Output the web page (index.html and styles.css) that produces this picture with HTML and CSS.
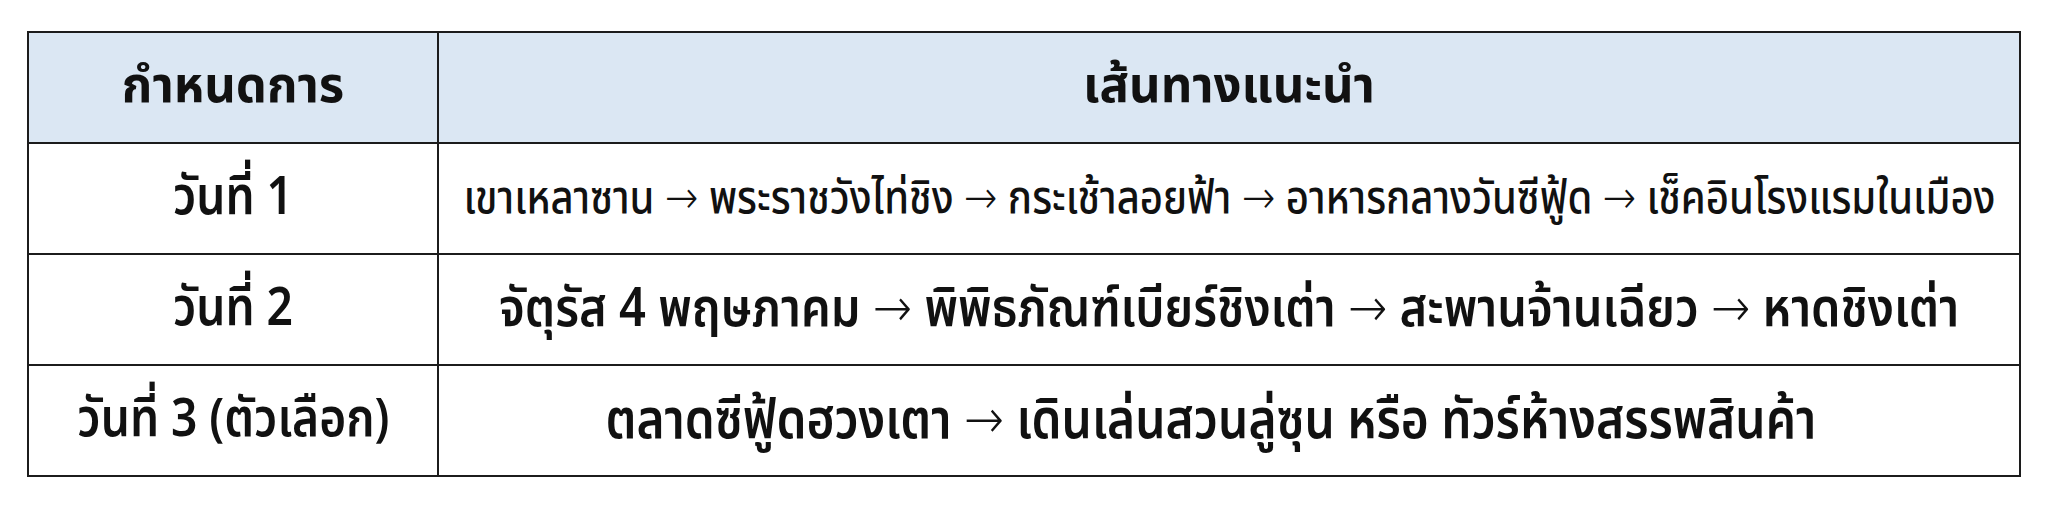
FILE: index.html
```html
<!DOCTYPE html>
<html lang="th">
<head>
<meta charset="utf-8">
<title>กำหนดการ</title>
<link rel="stylesheet" href="styles.css">
</head>
<body>
<div class="page">
  <table class="plan">
    <colgroup>
      <col class="col-day">
      <col class="col-route">
    </colgroup>
    <thead>
      <tr>
        <th>กำหนดการ</th>
        <th>เส้นทางแนะนำ</th>
      </tr>
    </thead>
    <tbody>
      <tr>
        <td class="day"><div class="cell"><span class="fit">วันที่ 1</span></div></td>
        <td class="route route-small"><div class="cell"><span class="fit">เขาเหลาซาน <span class="arrow">→</span> พระราชวังไท่ชิง <span class="arrow">→</span> กระเช้าลอยฟ้า <span class="arrow">→</span> อาหารกลางวันซีฟู้ด <span class="arrow">→</span> เช็คอินโรงแรมในเมือง</span></div></td>
      </tr>
      <tr>
        <td class="day"><div class="cell"><span class="fit">วันที่ 2</span></div></td>
        <td class="route"><div class="cell"><span class="fit">จัตุรัส 4 พฤษภาคม <span class="arrow">→</span> พิพิธภัณฑ์เบียร์ชิงเต่า <span class="arrow">→</span> สะพานจ้านเฉียว <span class="arrow">→</span> หาดชิงเต่า</span></div></td>
      </tr>
      <tr>
        <td class="day"><div class="cell"><span class="fit">วันที่ 3 (ตัวเลือก)</span></div></td>
        <td class="route route-last"><div class="cell"><span class="fit">ตลาดซีฟู้ดฮวงเตา <span class="arrow">→</span> เดินเล่นสวนลู่ซุน หรือ ทัวร์ห้างสรรพสินค้า</span></div></td>
      </tr>
    </tbody>
  </table>
</div>
</body>
</html>
```

FILE: styles.css
```css
html, body {
  margin: 0;
  padding: 0;
  background: #ffffff;
}

.page {
  padding: 31px 27px;
  font-family: "Noto Sans Thai", "Noto Sans", "DejaVu Sans", sans-serif;
  color: #111111;
}

.plan {
  width: 1994px;
  border-collapse: collapse;
  table-layout: fixed;
  border: 2px solid #1c1c1c;
}

.col-day {
  width: 410px;
}

.plan th,
.plan td {
  border: 2px solid #1c1c1c;
  text-align: center;
  vertical-align: middle;
  padding: 0;
  height: 109px;
  white-space: nowrap;
  line-height: 1.2;
}

.plan th {
  background: #dbe7f3;
  font-size: 49px;
  font-weight: 700;
}

.cell {
  display: flex;
  justify-content: center;
  align-items: center;
}

.fit {
  display: inline-block;
  transform: scaleX(0.87);
  transform-origin: center center;
}

.arrow {
  font-family: "DejaVu Sans", "Noto Sans", sans-serif;
  font-weight: 300;
}

.day {
  font-size: 53px;
  font-weight: 600;
}

.route {
  font-size: 54px;
  font-weight: 600;
}

.route-small {
  font-size: 46px;
  font-weight: 500;
}

.route-last {
  font-size: 55px;
}

.route-last .cell {
  padding-right: 36px;
}
```
